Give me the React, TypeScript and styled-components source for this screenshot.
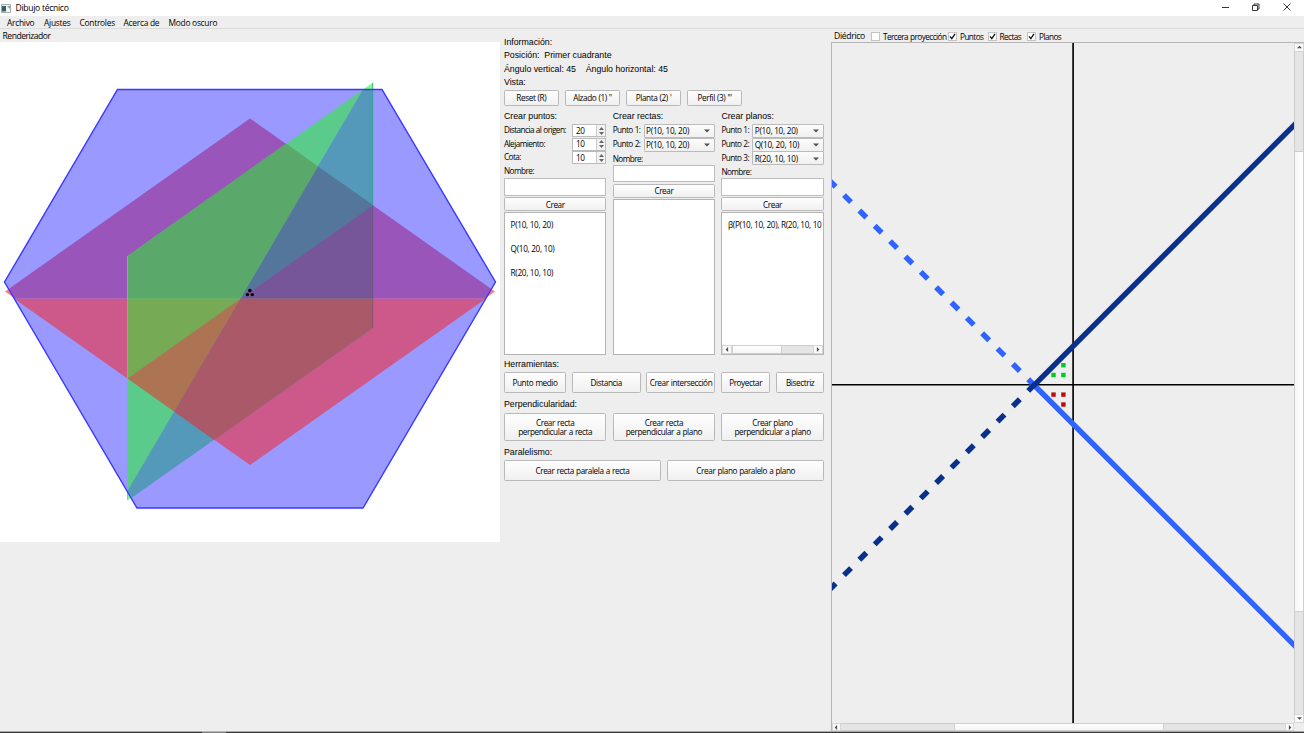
import React from "react";
import styled, { createGlobalStyle } from "styled-components";

const Global = createGlobalStyle`
  *{box-sizing:border-box}
  html,body{margin:0;padding:0;background:#eee;overflow:hidden}
  body{font-family:"Open Sans","Noto Sans",sans-serif;color:#000;font-size:8px}
  svg{display:block}
`;
const Window = styled.div`
  width:1304px;height:733px;display:flex;flex-direction:column;background:#eee;overflow:hidden;
`;
const TitleBar = styled.header`
  height:16px;background:#fff;display:flex;align-items:center;padding-left:1px;flex:none;
`;
const Title = styled.span`
  font-size:8.6px;line-height:16px;margin-left:4.5px;flex:1;white-space:nowrap;letter-spacing:-0.3px;
`;
const MenuBar = styled.nav`
  height:13px;flex:none;display:flex;border-bottom:1px solid #dcdcdc;padding-left:7px;
`;
const MenuItem = styled.span<{ $w: number }>`
  width:${p => p.$w}px;font-size:8.4px;line-height:13px;white-space:nowrap;letter-spacing:-0.26px;
`;
const Body = styled.main`
  flex:1;display:flex;min-height:0;
`;
const Left = styled.section`
  width:500px;flex:none;
`;
const DockTitle = styled.div`
  height:13px;line-height:14px;padding-left:2.5px;font-size:8.6px;letter-spacing:-0.5px;
`;
const Middle = styled.section`
  width:331px;flex:none;padding:6.6px 7px 0 4px;display:flex;flex-direction:column;
`;
const Heading = styled.div<{ $h?: number }>`
  font-family:"Liberation Sans",Arial,sans-serif;font-size:8.8px;height:${p => p.$h ?? 13.6}px;letter-spacing:-0.02px;
  line-height:${p => p.$h ?? 13.6}px;white-space:pre;flex:none;
`;
const Row = styled.div<{ $gap?: number; $mb?: number }>`
  display:flex;gap:${p => p.$gap ?? 6.3}px;margin-bottom:${p => p.$mb ?? 0}px;flex:none;
`;
const Button = styled.button<{ $w?: number; $h: number }>`
  ${p => (p.$w ? `width:${p.$w}px;` : "width:100%;")}
  height:${p => p.$h}px;padding:0;border:1px solid #b9b9b9;border-radius:1.5px;flex:none;
  background:linear-gradient(#fefefe,#f0f0f0);font:8.2px/9px "Open Sans",sans-serif;color:#000;
  display:flex;align-items:center;justify-content:center;text-align:center;white-space:pre;letter-spacing:-0.4px;word-spacing:0.4px;
`;
const Column = styled.div`
  width:102.4px;height:245.6px;flex:none;display:flex;flex-direction:column;
`;
const Field = styled.div<{ $h: number }>`
  height:${p => p.$h}px;display:flex;justify-content:space-between;align-items:center;flex:none;
`;
const Label = styled.span`
  font-size:8.2px;line-height:12px;white-space:nowrap;letter-spacing:-0.56px;word-spacing:0.4px;position:relative;top:-0.6px;
`;
const NameLabel = styled(Label)<{ $h: number; $drop?: number }>`
  display:block;height:${p => p.$h}px;line-height:${p => p.$h}px;flex:none;top:${p => p.$drop ?? 0}px;
`;
const Value = styled.span`
  font-size:8.2px;line-height:12px;letter-spacing:-0.26px;white-space:nowrap;
`;
const Spin = styled.div`
  width:34.5px;height:13px;border:1px solid #bbb;background:#fff;display:flex;justify-content:space-between;
  align-items:center;padding-left:3px;
`;
const SpinButtons = styled.div`
  width:9px;height:11px;background:#f3f3f3;border-left:1px solid #ccc;display:flex;align-items:center;justify-content:center;
`;
const Combo = styled.div`
  width:71.5px;height:14px;border:1px solid #bbb;border-radius:1px;background:linear-gradient(#fcfcfc,#f0f0f0);
  display:flex;justify-content:space-between;align-items:center;padding:1px 4px 0 1.5px;
`;
const Input = styled.div`
  height:17.5px;border:1px solid #bdbdbd;background:#fff;flex:none;margin-bottom:1.5px;
`;
const List = styled.div`
  flex:1;margin-top:1px;border:1px solid #b4b4b4;background:#fff;display:flex;flex-direction:column;overflow:hidden;
`;
const Items = styled.div`
  flex:1;padding:0.3px 0 0 5.6px;overflow:hidden;
`;
const Item = styled.div`
  height:23.7px;line-height:23.7px;font-size:8.2px;letter-spacing:-0.3px;white-space:nowrap;
`;
const HBar = styled.div<{ $h: number }>`
  height:${p => p.$h}px;display:flex;flex:none;background:#e5e5e5;
`;
const Arrow = styled.div<{ $w: number; $h: number }>`
  width:${p => p.$w}px;height:${p => p.$h}px;flex:none;background:#fafafa;border:1px solid #d6d6d6;
  display:flex;align-items:center;justify-content:center;
`;
const Track = styled.div<{ $s: number }>`
  flex:${p => p.$s} 0 0;background:#e5e5e5;border:1px solid #ccc;border-width:1px 0;
`;
const VTrack = styled(Track)`
  border-width:0 1px;
`;
const Thumb = styled.div<{ $s: number }>`
  flex:${p => p.$s} 0 0;background:linear-gradient(#fff,#f5f5f5);border:1px solid #cfcfcf;
`;
const VThumb = styled(Thumb)`
  background:linear-gradient(90deg,#f6f6f6,#fff);
`;
const Right = styled.section`
  flex:1;display:flex;flex-direction:column;min-width:0;
`;
const Options = styled.div`
  height:13px;display:flex;align-items:flex-start;padding-left:3px;flex:none;
`;
const OptionTitle = styled.span`
  width:37px;font-size:8.6px;line-height:14px;letter-spacing:-0.32px;
`;
const Option = styled.span<{ $w: number }>`
  width:${p => p.$w}px;display:flex;gap:3px;align-items:center;height:13px;padding-top:3px;font-size:8.2px;line-height:10px;
  white-space:nowrap;flex:none;letter-spacing:-0.54px;word-spacing:0.3px;
`;
const Box = styled.span`
  width:9px;height:9px;border:1px solid #c4c4c4;background:#fff;flex:none;margin-top:-1px;
`;
const Viewport = styled.div`
  flex:1;display:flex;border:1px solid #b5b5b5;border-width:1px 0 0 1px;min-height:0;
`;
const Canvas = styled.div`
  width:462px;display:flex;flex-direction:column;flex:none;
`;
const VBar = styled.div`
  width:10px;display:flex;flex-direction:column;
`;
const Corner = styled.div`
  height:8px;flex:none;
`;
const Taskbar = styled.footer`
  height:2px;flex:none;background:linear-gradient(#aaa 50%,#383838 50%);padding-left:202px;
`;
const TaskMark = styled.div`
  width:24px;height:2px;background:linear-gradient(#b8b8b8 50%,#808080 50%);
`;

const Tri = ({ d, s = 4 }: { d: "u" | "d" | "l" | "r"; s?: number }) => {
  const pts = { u: "0,5 4,1 8,5", d: "0,2 8,2 4,6", l: "5,0 5,8 1,4", r: "3,0 7,4 3,8" }[d];
  return <svg width={s} height={s} viewBox="0 0 8 8"><polygon points={pts} fill="#505050" /></svg>;
};
const Select = ({ label, value }: { label: string; value: string }) => (
  <Field $h={13.8}><Label>{label}</Label><Combo><Value>{value}</Value><Tri d="d" s={6} /></Combo></Field>
);
const SpinField = ({ label, value }: { label: string; value: number }) => (
  <Field $h={13.6}><Label>{label}</Label><Spin><Value>{value}</Value><SpinButtons>
    <svg width="5" height="8" viewBox="0 0 5 8"><path d="M0 3L2.5 0L5 3ZM0 5L2.5 8L5 5Z" fill="#666" /></svg>
  </SpinButtons></Spin></Field>
);
const Check = ({ label, on, w }: { label: string; on?: boolean; w: number }) => (
  <Option $w={w}><Box>{on && <svg width="7" height="7" viewBox="0 0 7 7"><path d="M1 3.3L2.8 5.7L6 .8" fill="none" stroke="#111" strokeWidth="1.3" /></svg>}</Box>{label}</Option>
);

const regions: [string, string][] = [
  ["#ff7f7f", "5,291.5 250,118.5 495,291.5 250,465"],
  ["#7fff7f", "373,82.5 373,328 127.5,500.5 127.5,256"],
  ["#9999ff", "117.5,89.5 382,89.5 495.5,282 363,508 137,508 4.5,282"],
  ["#9955b9", "9,288.7 250,118.5 491,288.7 486,298.5 14,298.5"],
  ["#cc5989", "14,298.5 486,298.5 250,465"],
  ["#5acb8a", "127.5,256 363,89.5 127.5,492"],
  ["#5499b9", "363,89.5 373,89.5 373,328 132,497.5 127.5,491"],
  ["#5aa96a", "127.5,256 286,143.5 318,166.5 240.7,298.5 127.5,298.5"],
  ["#54769a", "318,166.5 373,205 240.7,298.5"],
  ["#765599", "373,205 373,298.5 240.7,298.5"],
  ["#77aa55", "127.5,298.5 240.7,298.5 127.5,378.5"],
  ["#ac7453", "240.7,298.5 174,411.5 127.5,378.5"],
  ["#a95968", "240.7,298.5 373,298.5 373,328 214,440 174,411.5"],
];
const Scene = () => (
  <svg width="500" height="500" viewBox="0 42 500 500">
    <rect y="42" width="500" height="500" fill="#fff" />
    {regions.map(([fill, points]) => <polygon key={points} fill={fill} points={points} />)}
    <path d="M372.7 83V205" stroke="#29a884" strokeWidth=".8" />
    <path d="M372.7 205V328" stroke="#695477" strokeWidth=".6" />
    <path d="M127.5 256V500" stroke="#4bdc68" strokeWidth=".8" />
    <polygon points="117.5,89.5 382,89.5 495.5,282 363,508 137,508 4.5,282" fill="none" stroke="#3838ff" strokeWidth="1.4" />
    <path d="M247.5 294.5L250 290.5" stroke="#d02050" />
    <path d="M250 290.5L252.5 294.5" stroke="#16a070" />
    <circle cx="249.9" cy="290.6" r="1.8" /><circle cx="247.4" cy="294.6" r="1.7" /><circle cx="252.3" cy="294.6" r="1.7" />
  </svg>
);
const steps = Array.from({ length: 14 }, (_, i) => i);
const Diedric = () => (
  <svg width="462" height="680" viewBox="832 43 462 680">
    <path d="M1073.1 43V723" stroke="#151515" strokeWidth="1.8" />
    <path d="M832 384.8H1294" stroke="#000" strokeWidth="1.5" />
    <path d="M1034 385L1300 651" stroke="#3064ff" strokeWidth="5.4" />
    {steps.map(i => {
      const x = 1031.7 - i * 15.35, u = 382.8 - i * 15.35;
      return <path key={i} d={`M${x - 3.5} ${u - 3.5}l7 7`} stroke="#3064ff" strokeWidth="5.5" />;
    })}
    <path d="M1034 385.3L1300 119.3" stroke="#08308c" strokeWidth="5.4" />
    {steps.map(i => {
      const x = 1031.7 - i * 15.35, v = 387.4 + i * 15.35;
      return <path key={i} d={`M${x - 3.5} ${v + 3.5}l7 -7`} stroke="#08308c" strokeWidth="5.5" />;
    })}
    {[[1063.4, 365.2], [1053.5, 375], [1063.4, 375]].map(([x, y]) => <rect key={`${x}${y}`} x={x - 2.2} y={y - 2.2} width="4.4" height="4.4" fill="#0c2" />)}
    {[[1053.5, 394.6], [1063.4, 394.6], [1063.4, 404.5]].map(([x, y]) => <rect key={`${x}${y}`} x={x - 2.2} y={y - 2.2} width="4.4" height="4.4" fill="#c00a0a" />)}
  </svg>
);

export default function App() {
  return (
    <Window>
      <Global />
      <TitleBar>
        <svg width="10" height="9" viewBox="0 0 10 9"><path d="M.5.5h9v8h-9z" fill="#f5f5f5" stroke="#aaa" /><path d="M1 2h4v5.5H1z" fill="#2d6560" /><path d="M6 2h3v3z" fill="#6aa" /></svg>
        <Title>Dibujo técnico</Title>
        <svg width="84" height="16" viewBox="1220 0 84 16" fill="none" stroke="#222" strokeWidth=".9">
          <path d="M1222 7.5h7M1252.5 5.5h5v5h-5zM1254 5.5V4h5v5h-1.5M1283.5 3.5l7 7M1290.5 3.5L1283.5 10.5" />
        </svg>
      </TitleBar>
      <MenuBar>
        <MenuItem $w={37}>Archivo</MenuItem><MenuItem $w={35.5}>Ajustes</MenuItem><MenuItem $w={44}>Controles</MenuItem>
        <MenuItem $w={45}>Acerca de</MenuItem><MenuItem $w={60}>Modo oscuro</MenuItem>
      </MenuBar>
      <Body>
        <Left><DockTitle>Renderizador</DockTitle><Scene /></Left>
        <Middle>
          <Heading>Información:</Heading>
          <Heading>{"Posición:  Primer cuadrante"}</Heading>
          <Heading>{"Ángulo vertical: 45    Ángulo horizontal: 45"}</Heading>
          <Heading>Vista:</Heading>
          <Row $gap={6.5} $mb={3.2}>
            {["Reset (R)", "Alzado (1) ''", "Planta (2) '", "Perfil (3) '''"].map(t => <Button key={t} $w={54.6} $h={16}>{t}</Button>)}
          </Row>
          <Row $mb={2.7}>
            <Column>
              <Heading $h={14.8}>Crear puntos:</Heading>
              <SpinField label="Distancia al origen:" value={20} />
              <SpinField label="Alejamiento:" value={10} />
              <SpinField label="Cota:" value={10} />
              <NameLabel $h={13.3} $drop={-0.4}>Nombre:</NameLabel>
              <Input /><Button $h={14}>Crear</Button>
              <List><Items><Item>P(10, 10, 20)</Item><Item>Q(10, 20, 10)</Item><Item>R(20, 10, 10)</Item></Items></List>
            </Column>
            <Column>
              <Heading $h={14.8}>Crear rectas:</Heading>
              <Select label="Punto 1:" value="P(10, 10, 20)" />
              <Select label="Punto 2:" value="P(10, 10, 20)" />
              <NameLabel $h={13.3} $drop={0.4}>Nombre:</NameLabel>
              <Input /><Button $h={14}>Crear</Button>
              <List />
            </Column>
            <Column>
              <Heading $h={14.8}>Crear planos:</Heading>
              <Select label="Punto 1:" value="P(10, 10, 20)" />
              <Select label="Punto 2:" value="Q(10, 20, 10)" />
              <Select label="Punto 3:" value="R(20, 10, 10)" />
              <NameLabel $h={12.7} $drop={0.4}>Nombre:</NameLabel>
              <Input /><Button $h={14}>Crear</Button>
              <List>
                <Items><Item>β(P(10, 10, 20), R(20, 10, 10</Item></Items>
                <HBar $h={9}><Arrow $w={10} $h={9}><Tri d="l" s={5} /></Arrow><Thumb $s={50} /><Track $s={32} /><Arrow $w={10} $h={9}><Tri d="r" s={5} /></Arrow></HBar>
              </List>
            </Column>
          </Row>
          <Heading $h={14.8}>Herramientas:</Heading>
          <Row $gap={5.9} $mb={4.7}>
            <Button $w={62} $h={20.5}>Punto medio</Button><Button $w={68.7} $h={20.5}>Distancia</Button>
            <Button $w={69} $h={20.5}>Crear intersección</Button><Button $w={48.6} $h={20.5}>Proyectar</Button><Button $w={48.5} $h={20.5}>Bisectriz</Button>
          </Row>
          <Heading $h={15.5}>Perpendicularidad:</Heading>
          <Row $mb={4.3}>
            <Button $w={102.4} $h={28}>{"Crear recta\nperpendicular a recta"}</Button>
            <Button $w={102.4} $h={28}>{"Crear recta\nperpendicular a plano"}</Button>
            <Button $w={102.4} $h={28}>{"Crear plano\nperpendicular a plano"}</Button>
          </Row>
          <Heading $h={15}>Paralelismo:</Heading>
          <Row $gap={6.5}><Button $w={156.8} $h={21}>Crear recta paralela a recta</Button><Button $w={156.8} $h={21}>Crear plano paralelo a plano</Button></Row>
        </Middle>
        <Right>
          <Options>
            <OptionTitle>Diédrico</OptionTitle>
            <Check label="Tercera proyección" w={77} /><Check label="Puntos" on w={39.5} /><Check label="Rectas" on w={39.5} /><Check label="Planos" on w={40} />
          </Options>
          <Viewport>
            <Canvas>
              <Diedric />
              <HBar $h={8}><Arrow $w={9} $h={8}><Tri d="l" s={5} /></Arrow><Track $s={113} /><Thumb $s={209} /><Track $s={121} /><Arrow $w={9} $h={8}><Tri d="r" s={5} /></Arrow></HBar>
            </Canvas>
            <VBar><Arrow $w={10} $h={9}><Tri d="u" s={5} /></Arrow><VTrack $s={99} /><VThumb $s={460} /><VTrack $s={102} /><Arrow $w={10} $h={9}><Tri d="d" s={5} /></Arrow><Corner /></VBar>
          </Viewport>
        </Right>
      </Body>
      <Taskbar><TaskMark /></Taskbar>
    </Window>
  );
}
